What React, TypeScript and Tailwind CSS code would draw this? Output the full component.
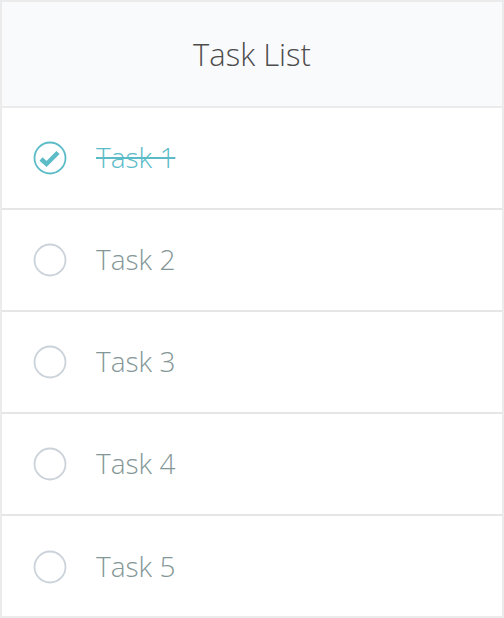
export default function App() {
  const tasks = [
    { id: 1, title: 'Task 1', done: true },
    { id: 2, title: 'Task 2', done: false },
    { id: 3, title: 'Task 3', done: false },
    { id: 4, title: 'Task 4', done: false },
    { id: 5, title: 'Task 5', done: false },
  ];

  return (
    <div className="w-[504px] h-[618px] bg-white border-2 border-[#ebebeb] font-['Open_Sans',sans-serif]">
      <div className="h-[106px] bg-[#f9fafc] border-b-2 border-[#ebebeb] flex items-center justify-center">
        <h1 className="text-[31px] font-light text-[#4d4d4d]">Task List</h1>
      </div>
      <ul>
        {tasks.map((task, index) => (
          <li
            key={task.id}
            className={`h-[102px] flex items-center pl-[31px] gap-[29px] ${index < tasks.length - 1 ? 'border-b-2 border-[#e6e6e6]' : ''}`}
          >
            {task.done ? (
              <svg width="34" height="34" viewBox="0 0 34 34">
                <circle cx="17" cy="17" r="15.5" fill="none" stroke="#5bbcc8" strokeWidth="1.8" />
                <path d="M8 18 L13.5 23 L25 11.5" fill="none" stroke="#5bbcc8" strokeWidth="4.5" strokeLinecap="butt" strokeLinejoin="miter" />
              </svg>
            ) : (
              <svg width="34" height="34" viewBox="0 0 34 34">
                <circle cx="17" cy="17" r="15.5" fill="none" stroke="#cbd2da" strokeWidth="1.8" />
              </svg>
            )}
            <span
              className={`text-[28px] font-light pb-[3px] ${task.done ? 'text-[#5bbcc8] line-through' : 'text-[#849797]'}`}
            >
              {task.title}
            </span>
          </li>
        ))}
      </ul>
    </div>
  );
}
